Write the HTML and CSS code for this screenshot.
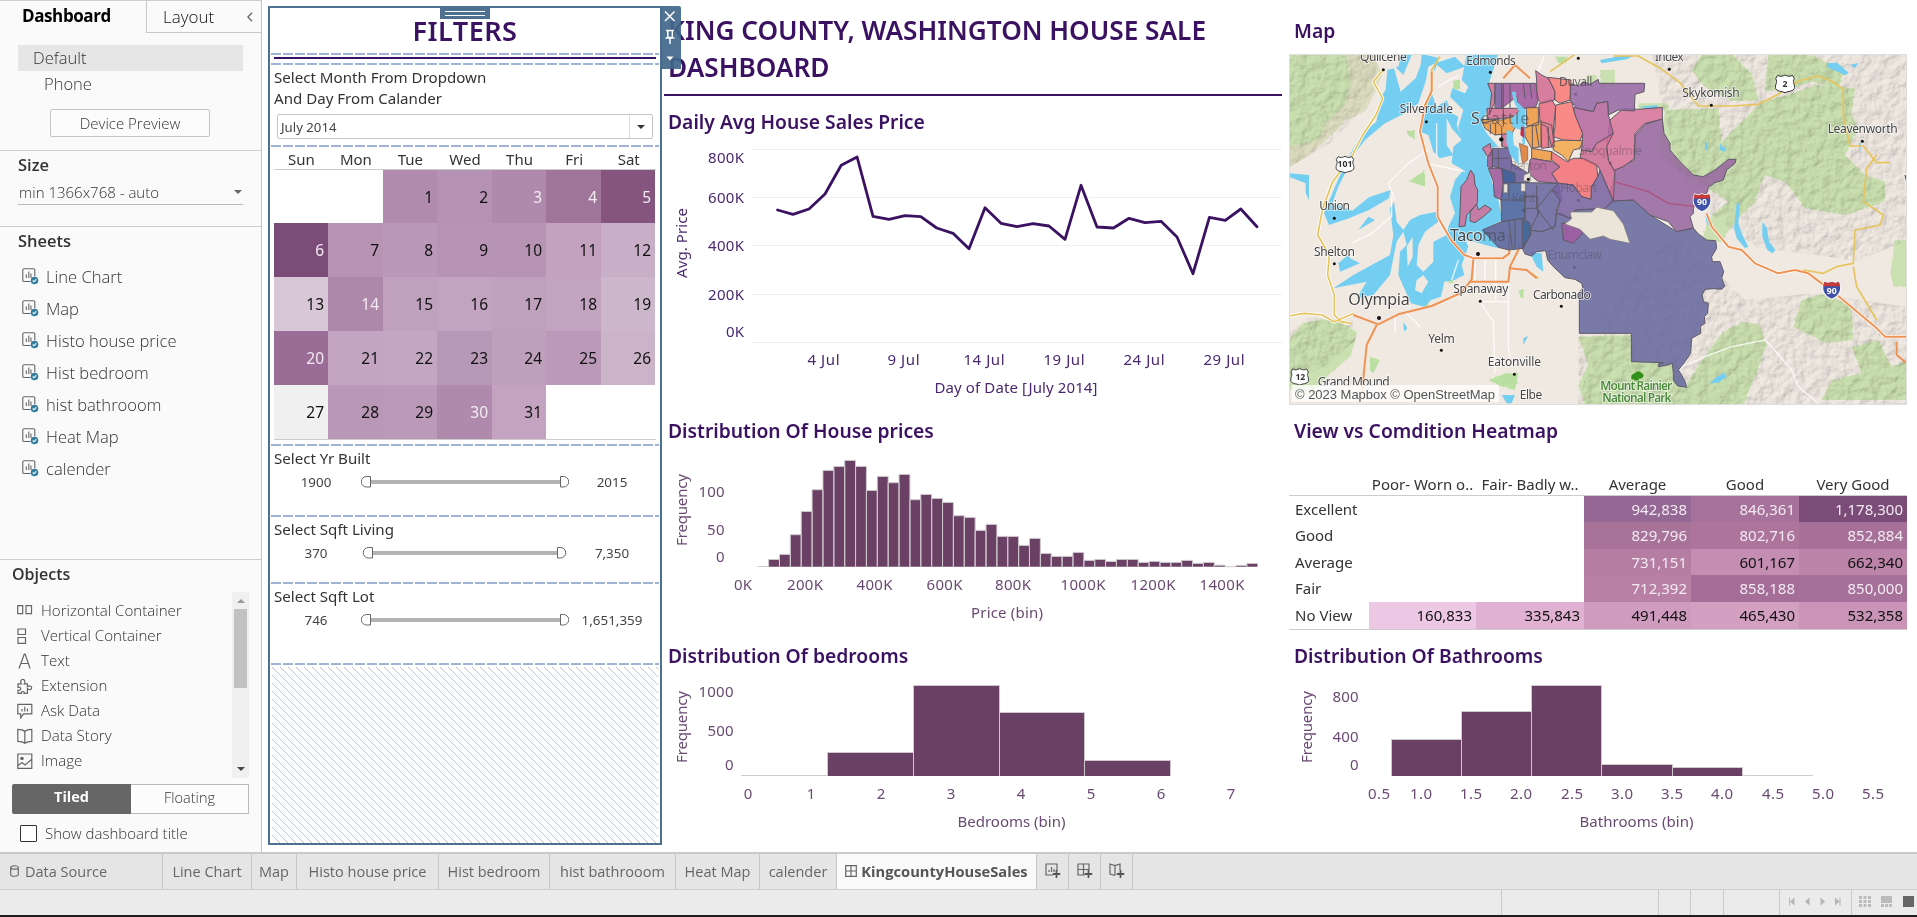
FILE: index.html
```html
<!DOCTYPE html>
<html lang="en">
<head>
<meta charset="utf-8">
<title>KingcountyHouseSales</title>
<link rel="stylesheet" href="styles.css">
</head>
<body>
<svg class="defs" width="0" height="0" aria-hidden="true">
  <symbol id="sheet" viewBox="0 0 17 17"><path d="M8.500 13.500H2a1.200 1.200 0 0 1-1.200-1.200V2A1.200 1.200 0 0 1 2 .8h9.600A1.200 1.200 0 0 1 12.800 2v6.300M4.300 10V6.500M6.800 10V3.500M9 10V5.500" fill="none" stroke="#666" stroke-width="1.100"/><circle cx="12.500" cy="12.500" r="3.800" fill="#347e9e"/><path d="m10.700 12.500 1.300 1.300 2.300-2.500" fill="none" stroke="#fff" stroke-width="1.100"/></symbol>
  <symbol id="plus" viewBox="0 0 10 10"><path d="M5 0v10M0 5h10" stroke="#555" stroke-width="2.200"/></symbol>
</svg>
<div class="app">
<main class="workspace">
  <aside class="sidebar">
    <div class="side-tabs"><b>Dashboard</b><span class="tab-layout"><span class="t-layout">Layout</span><svg width="6" height="10" viewBox="0 0 6 10"><path d="M5 .7.900 5 5 9.300" fill="none" stroke="#666" stroke-width="1.300"/></svg></span></div>
    <div class="devices"><div class="dev sel">Default</div><div class="dev phone">Phone</div><div class="preview">Device Preview</div></div>
    <section class="size"><h3>Size</h3><div class="select"><span>min 1366x768 - auto</span><i class="caret"></i></div></section>
    <section class="sheets"><h3>Sheets</h3>
      <ul>
        <li><svg class="ic"><use href="#sheet"/></svg><span>Line Chart</span></li>
        <li><svg class="ic"><use href="#sheet"/></svg><span>Map</span></li>
        <li><svg class="ic"><use href="#sheet"/></svg><span>Histo house price</span></li>
        <li><svg class="ic"><use href="#sheet"/></svg><span>Hist bedroom</span></li>
        <li><svg class="ic"><use href="#sheet"/></svg><span>hist bathrooom</span></li>
        <li><svg class="ic"><use href="#sheet"/></svg><span>Heat Map</span></li>
        <li><svg class="ic"><use href="#sheet"/></svg><span>calender</span></li>
      </ul>
    </section>
    <section class="objects"><h3>Objects</h3>
      <div class="objlist">
        <ul>
          <li><svg class="oi" viewBox="0 0 16 16"><path d="M.7 2.700h5v8h-5zM9 2.700h5.500v8H9z"/></svg>Horizontal Container</li>
          <li><svg class="oi" viewBox="0 0 16 16"><path d="M1 1h7.500v5.500H1zM1 9.500h7.500V15.300H1z"/></svg>Vertical Container</li>
          <li><svg class="oi" viewBox="0 0 16 16"><path d="M2 15.500 7.300 1h.8l5 14.500M3.700 10.500h7.800"/></svg>Text</li>
          <li><svg class="oi" viewBox="0 0 16 16"><path d="M1 5.800h3.400C2.800 3.500 4 1.300 5.800 1.300s3 2.200 1.400 4.500h3.200v3c1.800-1.500 4.300-1 4.300 1s-2.500 2.600-4.300 1v4.500H7.200c1-2.300-3.800-2.300-2.800 0H1v-3c3.600 1 3.600-4 0-3z"/></svg>Extension</li>
          <li><svg class="oi" viewBox="0 0 16 16"><path d="M.8 1.300h14v9.500H6.500l-2.800 4v-4H.8zM5 8.500V6M7.800 8.500V3.800M10.500 8.500V5.500"/></svg>Ask Data</li>
          <li><svg class="oi" viewBox="0 0 16 16"><path d="M7.800 3.500C6 1.600 3 1.300.8 1.300v12c2.500 0 5 .3 7 2 2-1.700 4.500-2 7-2v-12c-2.500 0-5.200.3-7 2.200v11.500"/></svg>Data Story</li>
          <li><svg class="oi" viewBox="0 0 16 16"><path d="M.8 1h14v14.300H.8zM1 12.500l4-3 3 2.500 6.500-5.500"/><circle cx="5" cy="5.500" r="1.200" fill="#666"/></svg>Image</li>
        </ul>
        <div class="scroll"><i class="up"></i><i class="thumb"></i><i class="down"></i></div>
      </div>
      <div class="toggle"><b>Tiled</b><span>Floating</span></div>
      <div class="check"><i></i><span>Show dashboard title</span></div>
    </section>
  </aside>

  <section class="filters">
    <div class="handle"><i></i><i></i></div>
    <div class="tools">
      <svg width="18" height="63" viewBox="0 0 18 63"><path d="m4 5.500 9.500 9.500M13.500 5.500 4 15M5 24.500h8M6.800 24.500v7h4.500v-7M4.500 32h9M9 32v6" fill="none" stroke="#fff" stroke-width="1.500"/><path d="M5.500 50.500h7L9 54.500z" fill="#fff"/></svg>
    </div>
    <h1 class="f-title">FILTERS</h1>
    <div class="dash"></div><div class="rule"></div><div class="dash"></div>
    <div class="month">
      <p class="m1">Select Month From Dropdown</p><p class="m2">And Day From Calander</p>
      <div class="drop"><span>July 2014</span><b><i class="caret dark"></i></b></div>
    </div>
    <div class="dash"></div>
    <div class="cal">
      <div class="week"><span>Sun</span><span>Mon</span><span>Tue</span><span>Wed</span><span>Thu</span><span>Fri</span><span>Sat</span></div>
      <div class="days">
        <span></span><span></span><span style="background:#b08bad">1</span><span style="background:#b592b3">2</span><span class="w" style="background:#b08aac">3</span><span class="w" style="background:#a0759a">4</span><span class="w" style="background:#85557f">5</span>
        <span class="w" style="background:#7b4c78">6</span><span style="background:#b794b4">7</span><span style="background:#ba98b8">8</span><span style="background:#b794b4">9</span><span style="background:#b794b4">10</span><span style="background:#c3a2c0">11</span><span style="background:#c8aec6">12</span>
        <span style="background:#d8c7d7">13</span><span class="w" style="background:#ae88ab">14</span><span style="background:#bfa0bd">15</span><span style="background:#c2a3c0">16</span><span style="background:#bfa0bd">17</span><span style="background:#c2a3c0">18</span><span style="background:#cdb7cc">19</span>
        <span class="w" style="background:#9a6d96">20</span><span style="background:#c3a4c1">21</span><span style="background:#c3a7c2">22</span><span style="background:#b898b7">23</span><span style="background:#bea0bd">24</span><span style="background:#bb9ab9">25</span><span style="background:#cbb3ca">26</span>
        <span style="background:#f0f0f0">27</span><span style="background:#b897b7">28</span><span style="background:#ba99b9">29</span><span class="w" style="background:#b08aac">30</span><span style="background:#c3a3c0">31</span><span></span><span></span>
      </div>
    </div>
    <div class="dash"></div>
    <div class="range r1"><p>Select Yr Built</p><div><span>1900</span><svg width="208" height="14" viewBox="0 0 208 14"><path d="M9 7h192" stroke="#b3b3b3" stroke-width="4"/><path d="M9.500 1.500v10.500h-4a5.250 5.250 0 0 1 0-10.500zM199.500 1.500v10.500h3a5.250 5.250 0 0 0 0-10.500z" fill="#fff" stroke="#666"/></svg><span>2015</span></div></div>
    <div class="dash"></div>
    <div class="range r2"><p>Select Sqft Living</p><div><span>370</span><svg width="208" height="14" viewBox="0 0 208 14"><path d="M11 7h188" stroke="#b3b3b3" stroke-width="4"/><path d="M11.500 1.500v10.500h-4a5.250 5.250 0 0 1 0-10.500zM196.500 1.500v10.500h3a5.250 5.250 0 0 0 0-10.500z" fill="#fff" stroke="#666"/></svg><span>7,350</span></div></div>
    <div class="dash"></div>
    <div class="range r3"><p>Select Sqft Lot</p><div><span>746</span><svg width="208" height="14" viewBox="0 0 208 14"><path d="M9 7h192" stroke="#b3b3b3" stroke-width="4"/><path d="M9.500 1.500v10.500h-4a5.250 5.250 0 0 1 0-10.500zM199.500 1.500v10.500h3a5.250 5.250 0 0 0 0-10.500z" fill="#fff" stroke="#666"/></svg><span>1,651,359</span></div></div>
    <div class="dash"></div>
    <svg class="hatch" width="386" height="176"><defs><pattern id="h" width="8" height="8" patternUnits="userSpaceOnUse"><path d="M-1-1 9 9M-1 7l2 2M7-1l2 2" stroke="#a9bfd8" stroke-width=".9"/></pattern></defs><rect width="386" height="176" fill="url(#h)"/></svg>
  </section>

  <section class="col mid">
    <h1 class="title"><span class="k1">KING COUNTY, WASHINGTON HOUSE SALE</span><br><span class="k2">DASHBOARD</span></h1>
    <h2 class="ct">Daily Avg House Sales Price</h2>
    <svg class="chart c-line" width="620" height="276" viewBox="664 140 620 276">
      <path d="M751 149.500h531M751 197.500h531M751 245.500h531M751 294.500h531M751 342.500h531" stroke="#f0f0f0"/>
      <g class="ax p" text-anchor="end"><text x="744" y="163" textLength="36">800K</text><text x="744" y="203" textLength="36">600K</text><text x="744" y="251" textLength="36">400K</text><text x="744" y="300" textLength="36">200K</text><text x="744" y="337" textLength="18">0K</text></g>
      <polyline fill="none" stroke="#3b1261" stroke-width="2.800" stroke-linejoin="round" stroke-linecap="round" points="777.600,210 793,214.300 809,209 825,194 841.200,165.300 857.100,157 873,216.300 889,219.300 905,215.700 920.800,216.700 936.700,228 953,233.300 969,248.700 985,207.700 1001,223.300 1017,226.700 1033,223.700 1049,226 1065,239.300 1081,185.300 1097,227 1113.500,228 1129,218.300 1145,222.700 1161,221.300 1177,237 1193,273.700 1209.400,217.300 1225.300,220.300 1240.800,209 1257,226.700"/>
      <g class="ax p" text-anchor="middle"><text x="823.500" y="365" textLength="32">4 Jul</text><text x="903.500" y="365" textLength="32">9 Jul</text><text x="984" y="365" textLength="41">14 Jul</text><text x="1064" y="365" textLength="41">19 Jul</text><text x="1144" y="365" textLength="41">24 Jul</text><text x="1224" y="365" textLength="41">29 Jul</text><text x="1016" y="393" textLength="163">Day of Date [July 2014]</text><text transform="translate(687 243) rotate(-90)" textLength="70">Avg. Price</text></g>
    </svg>
    <h2 class="ct">Distribution Of House prices</h2>
    <svg class="chart c-hist" width="620" height="192" viewBox="664 449 620 192">
      <path d="M757.500 566.500h11" stroke="#d0cdd0"/>
      <path fill="#6a4165" stroke="#cfc9ce" d="M768.600 566.700v-7.300h10.870v7.300v-12.300h10.870v12.300v-32h10.870v32v-55.300h10.870v55.300v-77h10.870v77v-96.300h10.870v96.300v-100.300h10.870v100.300v-106.300h10.870v106.300v-100.300h10.870v100.300v-76.300h10.870v76.300v-90.300h10.870v90.300v-84h10.870v84v-92.300h10.870v92.300v-67h10.870v67v-72.300h10.870v72.300v-68.300h10.870v68.300v-64.300h10.870v64.300v-51h10.870v51v-49.300h10.870v49.300v-36.300h10.870v36.300v-42.300h10.870v42.300v-30.300h10.870v30.300v-30.300h10.870v30.300v-21.300h10.870v21.300v-28.300h10.870v28.300v-13.300h10.870v13.300v-10.300h10.870v10.300v-10.300h10.870v10.300v-14.300h10.870v14.300v-6.300h10.870v6.300v-7.300h10.870v7.300v-5.300h10.870v5.300v-7.300h10.870v7.300v-7.300h10.870v7.300v-4.300h10.870v4.300v-5.300h10.870v5.300v-4.300h10.870v4.300v-4.300h10.870v4.300v-6.300h10.870v6.300v-3.300h10.870v3.300v-4.300h10.870v4.300v-1.500h10.870v1.500h10.870v-1.300h10.870v1.300v-3.300h10.870v3.300"/>
      <g class="ax q" text-anchor="end"><text x="724.500" y="497" textLength="26">100</text><text x="724.500" y="535" textLength="17.500">50</text><text x="724.500" y="562">0</text></g>
      <g class="ax q" text-anchor="middle"><text x="743" y="590" textLength="18">0K</text><text x="805" y="590" textLength="36">200K</text><text x="874.500" y="590" textLength="36">400K</text><text x="944.500" y="590" textLength="36">600K</text><text x="1013" y="590" textLength="36">800K</text><text x="1083" y="590" textLength="45">1000K</text><text x="1153" y="590" textLength="45">1200K</text><text x="1222" y="590" textLength="45">1400K</text><text x="1007" y="618" textLength="72">Price (bin)</text><text transform="translate(687 510) rotate(-90)" textLength="72">Frequency</text></g>
    </svg>
    <h2 class="ct">Distribution Of bedrooms</h2>
    <svg class="chart" width="620" height="170" viewBox="664 674 620 170">
      <path d="M741 775.500h87" stroke="#d0cdd0"/>
      <path fill="#6a4165" stroke="#cfc9ce" d="M827.500 776v-23.500h86v23.500v-90.500h86v90.500v-63.500h85v63.500v-15.500h86v15.500"/>
      <g class="ax q" text-anchor="end"><text x="733.500" y="697" textLength="35">1000</text><text x="733.500" y="736" textLength="26">500</text><text x="733.500" y="770">0</text></g>
      <g class="ax q" text-anchor="middle"><text x="748" y="799">0</text><text x="811" y="799">1</text><text x="881" y="799">2</text><text x="951" y="799">3</text><text x="1021" y="799">4</text><text x="1091" y="799">5</text><text x="1161" y="799">6</text><text x="1231" y="799">7</text><text x="1011.500" y="827" textLength="108">Bedrooms (bin)</text><text transform="translate(687 727) rotate(-90)" textLength="72">Frequency</text></g>
    </svg>
  </section>

  <section class="col right">
    <h2 class="ct mapt">Map</h2>
    <svg class="map" width="618" height="351" viewBox="12 162 1854 1053">
      <defs>
        <filter id="relief" x="0" y="0" width="100%" height="100%"><feTurbulence type="fractalNoise" baseFrequency=".035" numOctaves="4" seed="7" result="n"/><feDiffuseLighting in="n" surfaceScale="7" diffuseConstant="1.050" lighting-color="#fff"><feDistantLight azimuth="225" elevation="55"/></feDiffuseLighting><feComposite operator="in" in2="SourceGraphic"/></filter>
        <filter id="rough" x="-5%" y="-5%" width="110%" height="110%"><feTurbulence type="fractalNoise" baseFrequency=".09" numOctaves="3" seed="3"/><feDisplacementMap in="SourceGraphic" scale="8" xChannelSelector="R" yChannelSelector="G"/></filter>
        <symbol id="us" viewBox="0 0 60 58"><path d="M8 4c8 5 14 3 22-1 8 4 14 6 22 1l6 10c-8 12 4 18 0 30-4 9-18 7-28 12C20 51 6 53 2 44-2 32 10 26 2 14z" fill="#fff" stroke="#333" stroke-width="3"/></symbol>
        <symbol id="is" viewBox="0 0 56 56"><path d="M7 3c7 4 14 4 21 0 7 4 14 4 21 0 12 24 1 43-21 52C6 46-5 27 7 3z" fill="#3f52a8" stroke="#fff" stroke-width="3"/><path d="M7 4c7 4 14 4 21 0 7 4 14 4 21 0l4 13H3z" fill="#c63a3a"/></symbol>
      </defs>
      <rect x="12" y="162" width="1854" height="1053" fill="#f0e9e2"/>
      <g class="wood" filter="url(#rough)">
        <path fill="#dcdcc0" d="M12 162h250l30 60-20 50-30 60-60 30-60 60-60 50-50 30z"/>
        <path d="M12 162h170l15 90-20 70-50 40-30 60-85 20zM12 1020l40-50 60-12 60 10 45 30-20 70-70 60-50 60-65-20zM880 1010l165-5v80h130l20 80 60-90 60-80 60-30 50 10 20 60-30 80-40 100H900l-20-60 30-60zM1250 162h90l60 60 20 80-80 0-80-40-40-50zM1450 165h130l100 50-20 50-80-20-60 20-80 10z"/>
        <path d="M1140 330l160-5 10 100 60-60 60-60 80-20 80-30 120 10-10 80 20 40-40 80 60 60 60 20 0 60-120 40-120-20-60-80-60-20-30 80-60 60-40 60-60 0 20-70 60-50-60-40-90-50-60-60zM1550 900l70-20 80 40 5 100-80 10-100-50zM1700 1040l80-20 40 80 50-20v120h-260l30-60 90-20zM1830 720h36v140h-40l-10-40zM945 210h45v50h-45zM905 225h30v25h-30zM1060 310h90v20h-90z"/>
        <path fill="#b9e0a0" d="M370 545l50-35 0 50-30-10zM505 240h20v28h-20zM365 390h24v30l-20-15zM610 1140l50-20 40 0-10 50-40-10zM255 1070l30 10-20 40-10-10zM400 905h30v20zM810 170h35v20h-25zM490 830h15v18h-15zM700 870h15v25h-10z"/>
      </g>
      <path d="M12 162h270l-20 110-60 90-70 70-120 70zM12 1000l60-50 130 10 10 60-90 80-110 40zM1100 162h766v560l-150 60-300-40-220-160-60-250zM1150 700l130 100 100 100 200-20 286 40v295H880v-200z" filter="url(#relief)" class="shade"/>
      <g class="water">
        <path d="M545 162h95l-28 88 13 40-17 40-20 40 17 30 35 40-40 5 10 60 15 55 15 40 12 60-52 30 45 55-25-5-70-20-50 20-15-25 5-35 20-40-15-50 15-50 25-30-35-20 5-50 25-20-10-40 15-50-40-40 7-25 38 15 10-20-20-20zM410 162l52 12-12 36-30 40-20 60-40 30-60 30-60 50-30 40-20 40-30 60-18 50 60 22 50-40 65-22-5 25-60 35-60 25-60 20-15-35 25-60 40-95 50-85 42-35 13-75 15-20 5-60 20-5 20 70 45-40 15-40zM325 165h55l-25 60-20-20z"/>
        <path d="M327 605l8 60 20 25 20-30 30-15 50-10 5 30-40 30-20 40-5 60 20 20 30-30 0-60 40-20 45-10 20 45-20 55 8 30-30 15-30 5-10 45-30 10-20 20-40-10-18-40-20-45 5-70 20-20-10-40-20 30-20 100-50 60-50 10 30-50-100 20 60-40 110-60 10-60-10-80zM440 280l15 40 30-20 15 40 20 10-5 25 20 50-35-40-15-30 0 80 20 30-40 10-20-20-15-50-25-10 15-60zM12 520l60 5 0 75-10-20 0-30-50-20zM735 755l35 5 5 55-20-15-10-20zM160 790l35-30 0 15 30 15-60 25zM250 650l20 10-50 30zM540 200l-30-30-60 20 35 30z"/>
        <path d="M1060 320l60-5-10 15zM1626 190l30-2 35 30-10 8-55-25zM1695 195l25-6-10 15zM1355 610l10 0-5 60 10 30 20 40-10 5-25-30-8-30zM1432 665l14 20 6 40 20 25-10 10-15-10-15-40zM1275 1150l20-20 25-12 5 12-25 18zM1260 425l8 5v20h-8zM1305 430l10 15 10-10-5 20-15-5zM1722 430h6l-4 40zM1260 640l10 10 15 40-20-20zM945 180l60-12 40 0-20 10-75 12zM715 1015l15-8-15 28zM355 965l12 20-10 10zM650 1185h40l-10 25h-15z"/>
      </g>
      <path d="M365 740l18-30 0 60-15 30zM395 840l20-15 15 20-20 35-20-10zM350 160l-10 40-30-5 5-30zM430 200l20-10-10 60-20 5z" fill="#f0e9e2"/>
      <g fill="none" stroke="#fff" stroke-width="4" class="minor"><path d="M425 490l115 25M455 370v100M330 600l-20-50 60-60 60-40M330 1000v-50M365 940l40 40M570 780v60M600 780v60M520 780l-20 60M585 905l40 60 5 155M670 840v200l10 60M585 905h85M632 770l0 130M1170 1110l90-40 80-30 100-20 20 20 60 70 20 50 60 50M460 260l60-35M780 162l-20 50M320 590l0 60-60 50-60 30"/></g>
      <g fill="none" stroke-linejoin="round">
        <path d="M295 210l-30 35 28 50-20 50-40 60-30 60-60 80-30 80-15 80 35 60-5 60 20 60 0 60 20 20 30 5M12 948l45-8 55 5 35 20 60-25M1265 640l15 40 50 60 40 10 40 40 70 30 50-10 40 10 80 60 60 50 60 50 30 30h65M440 215v60l-20 40-15 80 25 95 28 70v90l40 70 40 45 30 10h85" stroke="#fff" stroke-width="10"/>
        <path d="M295 210l-30 35 28 50-20 50-40 60-30 60-60 80-30 80-15 80 35 60-5 60 20 60 0 60 20 20 30 5M12 948l45-8 55 5 35 20 60-25M465 170l-25 40 0 60-20 50M985 168l75 0 70 40 55 40 55 70h100l80-5 60-30 60-40 60-15 40 15 35 25 0 80 20 90 40 0 40 50 40 0M1775 465l-30 40-10 100 60 40-10 30-75 15-5 100-50 10-40 20-60-10M1705 800l10 60 60 100M740 820l20 15M795 215l80-55" stroke="#e6c35c" stroke-width="5"/>
        <path d="M440 215v60l-20 40-15 80 25 95 28 70v90l40 70 40 45 30 10h85l20-15 0-60M205 945l75 28 60-30 100-25 90-40 30-40 5-60M275 975l-30 60-15 150M555 845h115l5-45 30-60M690 195l-35 40M690 195l45 40M675 805l50 5 30 25M1265 640l15 40 50 60 40 10 40 40 70 30 50-10 40 10 80 60 60 50 60 50 30 30h65M1835 1025v40l30 25" stroke="#ef9253" stroke-width="6"/>
      </g>
      <path d="M1054 1143c-3-8-16-1-15-12 0-8 10-9 14-14 6-5 16-1 18 4 9 2 2 17-10 14v8zM1046 1142h18" fill="#2f8f16" stroke="#2f8f16"/>
      <g class="zips">
        <path fill="#6768a0" d="M735 690 770 695 810 680 815 640 830 640 855 655 872 630 960 625 980 603 1045 600 1095 645 1175 695 1225 684 1240 702 1265 720 1292 722 1295 745 1280 770 1282 785 1305 785 1316 815 1310 835 1319 858 1310 868 1285 866 1260 868 1251 885 1256 905 1270 910 1268 940 1258 950 1260 970 1247 978 1247 1000 1220 1015 1217 1060 1200 1085 1180 1110 1188 1122 1200 1145 1205 1162 1178 1158 1165 1140 1165 1120 1162 1090 1145 1096 1120 1100 1120 1092 1135 1088 1039 1085 1039 1000 883 1000 883 880 893 862 890 850 870 838 840 833 805 800 788 780 782 752 755 755 740 768 720 762 712 745 737 705Z"/>
        <path fill="#96679f" d="M985 545 990 510 1048 480 1050 405 1080 373 1132 357 1137 400 1155 430 1155 450 1180 480 1225 525 1255 530 1290 510 1330 478 1353 478 1350 490 1325 510 1315 540 1290 548 1270 562 1265 580 1225 600 1225 640 1215 650 1225 684 1175 695 1150 665 1095 645 1045 600 985 603 975 575Z"/>
        <path fill="#d8739a" d="M975 360 1015 325 1060 328 1132 322 1132 357 1080 370 1050 400 1048 475 1015 500 985 512 970 480 965 440Z"/>
        <path fill="#9668a4" d="M855 250 880 258 895 245 915 253 940 238 942 250 1079 250 1077 275 1050 283 1048 333 1000 330 970 345 968 305 935 310 925 335 875 325 855 300Z"/>
        <path fill="#b566a0" d="M866 322 925 335 935 310 968 305 970 345 985 400 960 420 935 430 920 455 890 450 893 405 870 345Z"/>
        <path fill="#d16b94" d="M890 450 920 455 935 430 985 400 965 440 970 480 990 515 985 603 960 545 940 500 885 475Z"/>
        <path fill="#f57077" d="M800 455 845 485 865 475 895 475 935 495 938 530 920 560 918 598 890 590 865 555 820 550 800 520 825 500 800 480Z"/>
        <path fill="#f2a94c" d="M802 425 835 420 893 422 885 445 865 450 850 485 830 465 805 450Z"/>
        <path fill="#fa7a76" d="M812 315 860 305 870 345 893 400 885 422 835 420 805 410 810 380ZM788 232 858 240 855 300 825 310 810 300 808 270Z"/>
        <path fill="#e86c84" d="M762 310 800 298 812 320 805 390 808 425 800 440 785 380 765 370ZM768 365 800 375 808 440 770 445Z"/>
        <path fill="#d36b93" d="M752 212 770 225 790 235 810 275 808 300 770 310 755 295 755 240ZM608 250 630 250 628 310 612 345 620 280ZM606 325 700 325 705 350 650 355 606 358ZM592 445 615 430 622 465 608 470ZM650 400 683 400 678 445 652 440Z"/>
        <path fill="#9d569c" d="M650 250 752 250 760 300 750 325 700 325 695 290 650 325ZM608 470 622 450 622 505 608 500ZM610 505 650 505 655 548 650 600 628 590 625 545Z"/>
        <path fill="#7a5c9e" d="M630 250H650V325H630Z"/>
        <path fill="#ef9840" d="M588 358 650 360 680 350 720 350 700 370 680 400 630 405 600 385ZM724 322H760V375L725 378ZM718 385 768 362V440L740 445 720 410ZM740 445 800 455 798 485 740 475Z"/>
        <path fill="#665b9b" d="M622 445 675 445 680 490 730 520V548H655L650 505 622 500Z"/>
        <path fill="#af6099" d="M740 475 800 485 825 500 800 520 820 550 760 545 730 520 735 480Z"/>
        <path fill="#3f6098" d="M650 505 690 520 690 548H655Z"/>
        <path fill="#465f9c" d="M655 548H720V655L650 665 648 600Z"/>
        <path fill="#6765a0" d="M720 548 820 550 830 600 815 625 810 680 770 695 735 690 720 660Z"/>
        <path fill="#7862a1" d="M820 550 865 555 890 590 918 598 920 560 938 530 945 510 960 545 985 603 960 625 870 630 855 655 815 640 825 600 800 570Z"/>
        <path fill="#a05ca0" d="M830 670H890L902 690 865 730 835 720Z"/>
        <path fill="#545f98" d="M592 690 650 665 712 655 737 700 715 745 672 750 640 742Z"/>
        <path fill="#3f6898" d="M712 655 735 670 737 705 712 740Z"/>
        <path fill="#d36f98" d="M557 510 567 525 570 555 578 570 577 610 545 645 540 678 522 680 525 640 528 560 545 540ZM556 635 575 612 580 630 600 615 620 628 595 650 570 668 555 663Z"/>
        <path fill="none" d="M655 250v130M675 250v75M715 250l5 45M735 250l5 45M590 370l40-10 20 20M616 370v32M632 370v35M650 380v60M683 380h22M720 590h38v60M720 625h38M755 555v70l50 65M742 375v70M752 375l10 65M650 600h68M690 660v85M672 548v50M640 450v55M622 475h50M760 620l40-50 20 10M790 380v60M672 665l10 80M735 690l30-60"/>
      </g>
      <path d="M680 275l12 0 4 30 25 25v45l-14 15-25-10-2-25 22-20-15-30zM665 390l18 5 3 40 15 10 0 50-25-30-12-40zM712 378h8v55h-8z" class="lake"/>
      <path d="M703 430l25 10 0 40-15 12-5-30z" fill="#e08a4a" stroke="#666" stroke-width="2"/><path fill="#c3304f" d="M708 380h10v35l-12-10z"/>
      <path d="M856 636l64 0 15-14 50 10 30 40 20 58-60-12-20-10-40 10-30-30-46-16 20-15zM656 552h12v26h-12zM708 550h13v24h-13zM717 525l20-8-2 28-20-3z" fill="#ebe4d8" stroke="#777" stroke-width="2"/>
      <path d="M985 545l55 15 50 15 60 35 80 10" fill="none" stroke="#b0527f" stroke-width="4"/>
      <g class="place">
        <text x="225" y="182" textLength="140">Quilcene</text><text x="544" y="194" textLength="148">Edmonds</text><text x="1110" y="184" textLength="86">Index</text><text x="1192" y="291" textLength="172">Skykomish</text><text x="1628" y="398" textLength="210">Leavenworth</text><text x="344" y="339" textLength="160">Silverdale</text><text x="103" y="631" textLength="92">Union</text><text x="87" y="767" textLength="123">Shelton</text><text x="505" y="879" textLength="165">Spanaway</text><text x="744" y="896" textLength="173">Carbonado</text><text x="430" y="1028" textLength="79">Yelm</text><text x="608" y="1097" textLength="160">Eatonville</text><text x="98" y="1159" textLength="216">Grand Mound</text><text x="704" y="1196" textLength="68">Elbe</text><text x="1858" y="552">W</text>
        <g class="faded"><text x="822" y="258" textLength="100" fill-opacity=".8">Duvall</text><text x="880" y="466" textLength="190">Snoqualmie</text><text x="674" y="511" textLength="112">Renton</text><text x="826" y="575" textLength="111">Hobart</text><text x="680" y="605" textLength="72">Kent</text><text x="788" y="777" textLength="163">Enumclaw</text></g>
        <g class="big"><text x="558" y="371" textLength="175">S<tspan class="dim">eattle</tspan></text><text x="495" y="722" textLength="167">Taco<tspan class="dim">ma</tspan></text><text x="190" y="915" textLength="184">Olympia</text></g>
        <g class="park"><text x="946" y="1170" textLength="216">Mount Rainier</text><text x="952" y="1205" textLength="208">National Park</text></g>
      </g>
      <g fill="#111"><circle cx="295" cy="209" r="4.500"/><circle cx="616" cy="217" r="4.500"/><circle cx="880" cy="175" r="4.500"/><circle cx="424" cy="365" r="4.500"/><circle cx="148" cy="655" r="4.500"/><circle cx="148" cy="791" r="4.500"/><circle cx="586" cy="904" r="4.500"/><circle cx="829" cy="919" r="4.500"/><circle cx="469" cy="1051" r="4.500"/><circle cx="688" cy="1123" r="4.500"/><circle cx="579" cy="762" r="6"/><circle cx="282" cy="954" r="6"/><circle cx="1153" cy="208" r="4.500"/><circle cx="1279" cy="316" r="4.500"/><circle cx="1732" cy="424" r="4.500"/><circle cx="649" cy="418" r="6.500"/><circle cx="730" cy="538" r="4.500"/></g>
      <g fill="#333" fill-opacity=".35"><circle cx="868" cy="802" r="4.500"/><circle cx="880" cy="601" r="4.500"/><circle cx="976" cy="490" r="4.500"/><circle cx="872" cy="283" r="4.500"/><circle cx="716" cy="631" r="4.500"/></g>
      <use href="#us" x="141" y="466" width="78" height="54"/><use href="#us" x="12" y="1103" width="64" height="54"/><use href="#us" x="1469" y="222" width="62" height="58"/>
      <use href="#is" x="1222" y="578" width="58" height="58"/><use href="#is" x="1611" y="841" width="58" height="58"/>
      <g class="shield"><text x="180" y="502">101</text><text x="46" y="1140">12</text><text x="1500" y="261">2</text><text x="1251" y="616" fill="#fff">90</text><text x="1640" y="881" fill="#fff">90</text></g>
      <rect x="20" y="1155" width="622" height="50" fill="#fff" fill-opacity=".8"/><text class="attr" x="30" y="1196" textLength="600">© 2023 Mapbox © OpenStreetMap</text>
      <rect x="13.500" y="163.500" width="1851" height="1050" fill="none" stroke="#dedede" stroke-width="3"/>
    </svg>
    <h2 class="ct viewt">View vs Comdition Heatmap</h2>
    <div class="heat">
      <div class="hh"><span></span><span>Poor- Worn o..</span><span>Fair- Badly w..</span><span>Average</span><span>Good</span><span>Very Good</span></div>
      <div class="hb">
        <b>Excellent</b><i></i><i></i><i class="w" style="background:#946794">942,838</i><i class="w" style="background:#a6719a">846,361</i><i class="w" style="background:#7b4c78">1,178,300</i>
        <b>Good</b><i></i><i></i><i class="w" style="background:#a87399">829,796</i><i class="w" style="background:#ad759c">802,716</i><i class="w" style="background:#a67099">852,884</i>
        <b>Average</b><i></i><i></i><i class="w" style="background:#b57da1">731,151</i><i style="background:#c48eb3">601,167</i><i style="background:#bb84a8">662,340</i>
        <b>Fair</b><i></i><i></i><i class="w" style="background:#b880a4">712,392</i><i class="w" style="background:#a46e99">858,188</i><i class="w" style="background:#a57099">850,000</i>
        <b>No View</b><i style="background:#ecc8e4">160,833</i><i style="background:#e0b1d2">335,843</i><i style="background:#cf9cbf">491,448</i><i style="background:#d3a0c2">465,430</i><i style="background:#c994b7">532,358</i>
      </div>
    </div>
    <h2 class="ct batht">Distribution Of Bathrooms</h2>
    <svg class="chart" width="620" height="170" viewBox="1289 674 620 170">
      <path d="M1742 775.500h71" stroke="#d0cdd0"/>
      <path fill="#6a4165" stroke="#cfc9ce" d="M1391.500 776v-36.500h70v36.500v-64.500h70v64.500v-90.500h70v90.500v-11.500h71v11.500v-8.500h70v8.500"/>
      <g class="ax q" text-anchor="end"><text x="1358.500" y="702" textLength="26">800</text><text x="1358.500" y="742" textLength="26">400</text><text x="1358.500" y="770">0</text></g>
      <g class="ax q" text-anchor="middle"><text x="1379" y="799" textLength="22">0.5</text><text x="1421" y="799" textLength="22">1.0</text><text x="1471" y="799" textLength="22">1.5</text><text x="1521" y="799" textLength="22">2.0</text><text x="1572" y="799" textLength="22">2.5</text><text x="1622" y="799" textLength="22">3.0</text><text x="1672" y="799" textLength="22">3.5</text><text x="1722" y="799" textLength="22">4.0</text><text x="1773" y="799" textLength="22">4.5</text><text x="1823" y="799" textLength="22">5.0</text><text x="1873" y="799" textLength="22">5.5</text><text x="1636.500" y="827" textLength="114">Bathrooms (bin)</text><text transform="translate(1312 727) rotate(-90)" textLength="72">Frequency</text></g>
    </svg>
  </section>
</main>
<nav class="tabs">
  <span class="ds"><svg width="9" height="12" viewBox="0 0 9 12"><path d="M.7 2.500v7c0 2.400 7.600 2.400 7.600 0v-7c0-2.400-7.600-2.400-7.600 0 0 2.200 7.600 2.200 7.600 0" fill="none" stroke="#666" stroke-width="1.100"/></svg>Data Source</span>
  <span style="width:89px">Line Chart</span><span style="width:45px">Map</span><span style="width:142px">Histo house price</span><span style="width:111px">Hist bedroom</span><span style="width:126px">hist bathrooom</span><span style="width:84px">Heat Map</span><span style="width:77px">calender</span>
  <span class="on"><svg width="12" height="12" viewBox="0 0 12 12"><path d="M.7.700h10.600v10.600H.7zM6 .7v10.600M.7 6h10.600" fill="none" stroke="#666" stroke-width="1.200"/></svg><b>KingcountyHouseSales</b></span>
  <span class="add"><svg width="16" height="16" viewBox="0 0 16 16"><path d="M8 12H1V1h11v7M4 9V7M6.500 9V4M9 9V6" fill="none" stroke="#666" stroke-width="1.200"/><use href="#plus" x="7.500" y="7" width="8" height="8"/></svg></span>
  <span class="add"><svg width="16" height="16" viewBox="0 0 16 16"><path d="M8 12H1V1h11v6M6.500 1v11M1 6.500h11" fill="none" stroke="#666" stroke-width="1.200"/><use href="#plus" x="7.500" y="7" width="8" height="8"/></svg></span>
  <span class="add"><svg width="16" height="16" viewBox="0 0 16 16"><path d="M6 12.500 1 11V1l5 1.500L11 1v6M6 2.500v10" fill="none" stroke="#666" stroke-width="1.200"/><use href="#plus" x="7.500" y="7" width="8" height="8"/></svg></span>
</nav>
<footer class="status">
  <span></span><span style="width:157px"></span><span style="width:32px"></span><span style="width:33px"></span><span style="width:56px"></span>
  <span class="nav" style="width:72px"><svg width="72" height="25" viewBox="0 0 72 25"><path d="M9 7.500h1v8H9zM14.500 7.500v8l-4.500-4zM29.500 7.500v8L25 11.500zM40.500 7.500v8l4.500-4zM55 7.500v8l4.500-4zM59.500 7.500h1v8h-1z" fill="#b5b5b5"/></svg></span>
  <svg width="65" height="25" viewBox="0 0 65 25"><path d="M7 6h3v3H7zm4.500 0h3v3h-3zM16 6h3v3h-3zM7 10h3v3H7zm4.500 0h3v3h-3zM16 10h3v3h-3zM7 14h3v3H7zm4.500 0h3v3h-3zM16 14h3v3h-3zM29 6h11v7H29zM29 14h3v3h-3zM33 14h3v3h-3zM37 14h3v3h-3z" fill="#bbb"/><path d="M51 6h11v11H51z" fill="#666"/></svg>
</footer>
<div class="edge"></div>
</div>
</body>
</html>
```
FILE: styles.css
```css
*{box-sizing:border-box}
body{margin:0;width:1917px;height:917px;overflow:hidden;background:#fff;font-family:"Open Sans","Noto Sans",sans-serif;color:#333}
h1,h2,h3,p,ul{margin:0;padding:0}
ul{list-style:none}
.defs{position:absolute}
svg{display:block;flex:none}
.app{display:flex;flex-direction:column;height:917px}
.workspace{display:flex;height:852px}

.sidebar{width:262px;flex:none;background:#fafafa;border-right:1px solid #c6c6c6;border-top:1px solid #ccc;font-weight:350;white-space:nowrap}
.side-tabs{display:flex;height:32px;line-height:30px}
.side-tabs b{width:146px;padding-left:22px;font-size:17px;font-weight:700;color:#000;letter-spacing:-.4px}
.tab-layout{flex:1;display:flex;align-items:center;justify-content:space-between;padding:0 8px 0 16px;border-left:1px solid #c8c8c8;border-bottom:1px solid #c8c8c8;font-size:17px;color:#111}
.devices{height:118px;padding:12px 18px 0;border-bottom:1px solid #ccc}
.dev{height:26px;line-height:25px;padding-left:15px;font-size:16.500px}
.dev.sel{background:#e6e6e6}
.dev.phone{padding-left:26px}
.preview{margin:12px 0 0 32px;width:160px;height:28px;border:1px solid #c4c4c4;border-radius:2px;text-align:center;font-size:15px;line-height:26px;background:#fcfcfc}
h3{font-size:16.500px;font-weight:600;line-height:28px;height:28px;color:#333}
.size{height:76px;padding:0 18px;border-bottom:1px solid #ccc}
.select{display:flex;justify-content:space-between;align-items:center;height:26px;border-bottom:1px solid #bbb;padding:0 1px;font-size:15px;line-height:22px}
.caret{border:4px solid transparent;border-top:4.500px solid #666;border-bottom:0}
.caret.dark{border-top-color:#333}
.sheets{height:333px;padding:0 18px;border-bottom:1px solid #ccc}
.sheets ul{padding-top:5px}
.sheets li{display:flex;align-items:center;height:32px;padding-left:4px;gap:7px;font-size:16.600px;line-height:31px}
.ic{width:17px;height:17px}
.objects{padding:0 12px}
.objects h3{font-size:16px}
.objlist{display:flex;justify-content:space-between;height:186px;margin-top:4px;font-size:15.100px}
.objlist ul{padding-top:6px}
.objlist li{display:flex;align-items:center;height:25px;gap:8px;padding-left:5px;line-height:25px}
.oi{width:16px;height:16px;fill:none;stroke:#666;stroke-width:1.200}
.scroll{width:17px;background:#f0f0f0;display:flex;flex-direction:column;align-items:center;padding:7px 0}
.up{border:4px solid transparent;border-bottom-color:#999;border-top:0}
.thumb{width:13px;height:79px;margin-top:6px;background:#c1c1c1}
.down{border:4px solid transparent;border-top-color:#444;border-bottom:0;margin-top:auto}
.toggle{display:flex;height:30px;margin-top:6px;font-size:14.500px;line-height:26px;text-align:center}
.toggle b{width:119px;background:#666;color:#fff;border-radius:2px 0 0 2px}
.toggle span{width:118px;border:1px solid #bbb;border-left:0;background:#fcfcfc}
.check{display:flex;align-items:center;gap:8px;margin-top:11px;padding-left:8px;font-size:15px;line-height:17px}
.check i{width:17px;height:17px;border:1px solid #333;border-radius:1px;background:#fff}

.filters{position:relative;width:394px;height:839px;margin:6px 0 0 6px;flex:none;border:2px solid #4f7191;padding:0 1px;font-family:"Noto Sans",sans-serif}
.handle{position:absolute;left:170px;top:0;width:50px;height:11px;background:#4f7191;display:flex;flex-direction:column;justify-content:center;gap:3px;padding:0 5px}
.handle i{height:1px;background:#fff}
.tools{position:absolute;left:391px;top:-2px;width:20px;height:63px;background:rgba(66,103,138,.92);border-radius:0 2px 0 0;z-index:2}
.f-title{height:45px;padding:7px 0 0 0;line-height:32px;text-align:center;font-size:27px;font-weight:600;color:#3b1261;letter-spacing:.5px}
.dash{height:2px;background:repeating-linear-gradient(90deg,#9fb3d5 0 10px,#fff 10px 12px)}
.rule{height:2px;margin:2px 3px 4px;background:#3b1261}
.month{height:80px;padding:2px 3px 0}
.month p,.range p{font-size:15.100px;line-height:21px;height:21px}
.drop{display:flex;width:376px;height:25px;margin:5px 0 0 3px;border:1px solid #c4c4c4;border-radius:2px;font-size:13.200px;line-height:25px;padding-left:3px;color:#444}
.drop span{flex:1}
.drop b{width:23px;border-left:1px solid #ddd;display:flex;align-items:center;justify-content:center}
.cal{height:297px;padding:3px 3px 0;width:388px}
.week{display:grid;grid-template-columns:repeat(7,1fr);height:20px;line-height:19px;border-bottom:1px solid #ccc;font-size:15px;text-align:center}
.days{display:grid;grid-template-columns:54px 55px 54px 55px 54px 55px 54px;grid-template-rows:53px 54px 54px 54px 54px;border-bottom:1px solid #ccc;width:382px;font-size:15.500px;line-height:55px;color:#111;text-align:right}
.days span{padding-right:4px}
.w{color:#f3eaf2!important}
.range{padding:2px 3px 0}
.range div{display:flex;align-items:center;height:22px;margin-top:2px;font-size:13.400px;line-height:22px;color:#444}
.range span{width:84px;text-align:center}
.range svg{margin:0 1px 0 3px}
.r1{height:69px}.r2{height:65px}.r3{height:79px}
.hatch{margin:2px 0 0 1px}

.col{width:620px;flex:none;font-family:"Noto Sans",sans-serif}
.mid{margin-left:2px}
.right{margin-left:5px}
.title{height:96px;width:618px;padding:12px 0 0 4px;border-bottom:2px solid #3b1261;font-size:26.200px;font-weight:600;line-height:37px;color:#3b1261;white-space:nowrap}
.ct{font-size:19.300px;font-weight:600;color:#3b1261;padding-left:4px;line-height:26px;height:33px;white-space:nowrap}
.mid .title+.ct{height:44px;padding-top:13px}
.right .ct{padding-left:5px}
.mapt{height:54px;padding-top:18px}
.map{height:351px}
.c-line + .ct{padding-top:2px}
.c-hist + .ct{padding-top:2px}
.viewt{height:55px;margin-top:9px;padding-top:4px}
.heat{width:618px;border-bottom:1px solid #ccc;font-size:15px;color:#333;height:161px}
.hh,.hb{display:grid;grid-template-columns:80px 107px 108px 107px 108px 108px}
.hh{height:27px;line-height:30px;text-align:center;border-bottom:1px solid #ccc;white-space:nowrap}
.hb{grid-template-rows:26px 27px 26px 27px 27px;line-height:26px}
.hb b{font-weight:400;padding-left:6px}
.hb i{font-style:normal;text-align:right;padding-right:4px;color:#111}
.batht{padding-top:13px;height:44px}
.ax{font-size:15px}
.p{fill:#4a2870}
.q{fill:#6a4a72}

.map{font-family:"Noto Sans",sans-serif}
.wood{fill:#cbe0b0}
.shade{mix-blend-mode:multiply;opacity:.55}
.water,.lake{fill:#74cef1}
.minor{opacity:.8}
.place{font-size:36px;fill:#444;paint-order:stroke;stroke:#fff;stroke-width:5px;stroke-opacity:.7}
.big{font-size:48px}
.faded,.dim{fill-opacity:.35;stroke:none}
.dim{fill-opacity:.55}
.park{font-weight:600;fill:#4d8a3c}
.zips{stroke:#5f5a66;stroke-width:3;fill-opacity:.86;stroke-linejoin:round}
.shield{font-size:26px;font-weight:700;text-anchor:middle;fill:#333}
.attr{font-family:"Liberation Sans",sans-serif;font-size:39px;fill:#555}

.tabs{display:flex;height:38px;background:#e5e5e5;border-top:2px solid #c9c9c9;border-bottom:1px solid #cfcfcf;font-size:14.500px;color:#666;white-space:nowrap}
.tabs>span{flex:none;border-right:1px solid #c6c6c6;display:flex;align-items:center;justify-content:center;padding-bottom:1px}
.tabs .ds{width:163px;justify-content:flex-start;padding-left:10px;gap:6px}
.tabs .on{width:200px;background:#fafafa;gap:4px;color:#555}
.tabs .on b{font-weight:700;font-size:14.700px}
.tabs .add{width:32px}
.status{display:flex;height:25px;background:#ebebeb}
.status span{border-right:1px solid #cbcbcb;width:1502px;flex:none}
.edge{height:2px;background:#231c1e}
```
